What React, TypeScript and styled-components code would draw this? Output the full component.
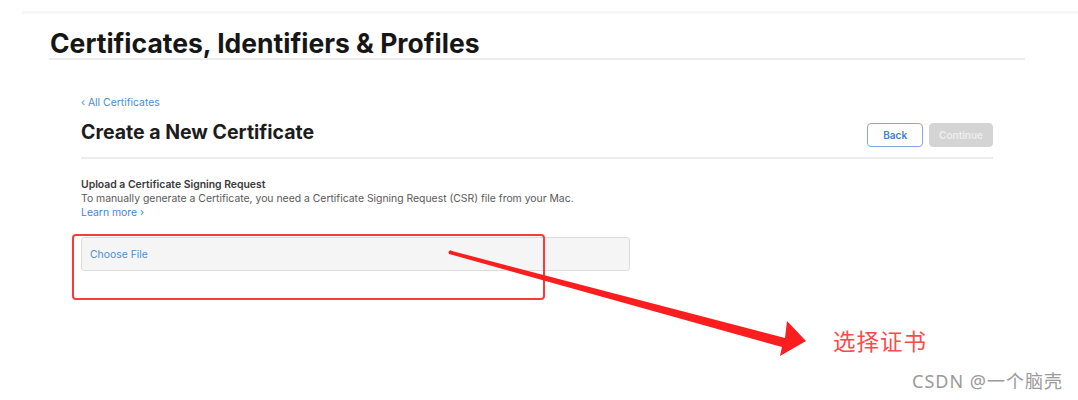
import styled, { createGlobalStyle } from 'styled-components';

const Global = createGlobalStyle`
    html, body {
        margin: 0;
        padding: 0;
        background: #ffffff;
        font-family: Inter, "Noto Sans", "Liberation Sans", sans-serif;
    }
`;

const Page = styled.div`
    position: relative;
    width: 1078px;
    height: 400px;
    overflow: hidden;
    background: #fff;
`;

const TopStrip = styled.div`
    margin: 11px 0 0 22px;
    height: 3px;
    background: #f6f6f6;
`;

const Header = styled.header`
    margin: 0 0 0 49px;
    width: 976px;
    border-bottom: 2px solid #ededed;
    padding-top: 14px;
    h1 {
        margin: 0 0 0 1px;
        font-size: 26.5px;
        line-height: 30px;
        font-weight: 700;
        color: #161616;
    }
`;

const Content = styled.main`
    margin: 37px 0 0 81px;
    width: 912px;
`;

const BackLink = styled.a`
    display: block;
    font-size: 10.4px;
    line-height: 12px;
    color: #4a8ed8;
    text-decoration: none;
`;

const HeadRow = styled.div`
    display: flex;
    align-items: flex-end;
    justify-content: space-between;
    margin-top: 11px;
    padding-bottom: 10px;
    border-bottom: 2px solid #ececec;
    h2 {
        margin: 0 0 3px;
        font-size: 19.5px;
        line-height: 24px;
        font-weight: 700;
        color: #1c1c1c;
    }
`;

const Buttons = styled.div`
    display: flex;
    gap: 6px;
`;

const Button = styled.button<{ $primary?: boolean }>`
    height: 24px;
    padding: 0 ${(p) => (p.$primary ? '9px' : '15px')};
    border-radius: 4px;
    font-family: inherit;
    font-size: 10px;
    font-weight: 600;
    border: 1.5px solid ${(p) => (p.$primary ? '#d4d4d4' : '#80a9dd')};
    background: ${(p) => (p.$primary ? '#d4d4d4' : '#fff')};
    color: ${(p) => (p.$primary ? '#eeeeee' : '#3f7fcc')};
`;

const Section = styled.section`
    margin-top: 19px;
    font-size: 10.4px;
    line-height: 14px;
    h3 {
        margin: 0;
        font-size: 10.4px;
        font-weight: 600;
        color: #3a3a3a;
    }
    p {
        margin: 0;
        color: #595959;
    }
    a {
        display: block;
        color: #3f86d4;
        text-decoration: none;
    }
`;

const FileField = styled.div`
    margin-top: 17px;
    width: 549px;
    height: 34px;
    display: flex;
    align-items: center;
    padding-left: 8px;
    box-sizing: border-box;
    background: #f5f5f5;
    border: 1px solid #dcdcdc;
    border-radius: 3px;
    font-size: 10.4px;
    color: #4f8dd0;
`;

const Highlight = styled.div`
    position: absolute;
    left: 72px;
    top: 234px;
    width: 473px;
    height: 66px;
    box-sizing: border-box;
    border: 2px solid #fb3a3a;
    border-radius: 4px;
`;

const Arrow = styled.svg`
    position: absolute;
    left: 0;
    top: 0;
    pointer-events: none;
`;

const Note = styled.div`
    position: absolute;
    left: 833px;
    top: 325px;
    font-family: "Noto Sans CJK SC", sans-serif;
    font-size: 22.5px;
    line-height: 30px;
    color: #fa4a4a;
    letter-spacing: 1px;
`;

const Watermark = styled.div`
    position: absolute;
    left: 912px;
    top: 369px;
    font-family: "Noto Sans", "Noto Sans CJK SC", sans-serif;
    font-size: 18px;
    line-height: 24px;
    color: #9a9a9a;
    letter-spacing: 1px;
`;

export default () => {
    return (
        <Page>
            <Global />
            <TopStrip />
            <Header>
                <h1>Certificates, Identifiers &amp; Profiles</h1>
            </Header>
            <Content>
                <BackLink href="#">‹ All Certificates</BackLink>
                <HeadRow>
                    <h2>Create a New Certificate</h2>
                    <Buttons>
                        <Button>Back</Button>
                        <Button $primary>Continue</Button>
                    </Buttons>
                </HeadRow>
                <Section>
                    <h3>Upload a Certificate Signing Request</h3>
                    <p>To manually generate a Certificate, you need a Certificate Signing Request (CSR) file from your Mac.</p>
                    <a href="#">Learn more ›</a>
                </Section>
                <FileField>Choose File</FileField>
            </Content>
            <Highlight />
            <Arrow width="1078" height="400" viewBox="0 0 1078 400">
                <polygon points="450,250.5 451,254.5 782,347 780,356 806,341 787,321 785,338" fill="#fb1e1e" />
                <circle cx="450.5" cy="252.5" r="2" fill="#fb1e1e" />
            </Arrow>
            <Note>选择证书</Note>
            <Watermark>CSDN @一个脑壳</Watermark>
        </Page>
    );
};
